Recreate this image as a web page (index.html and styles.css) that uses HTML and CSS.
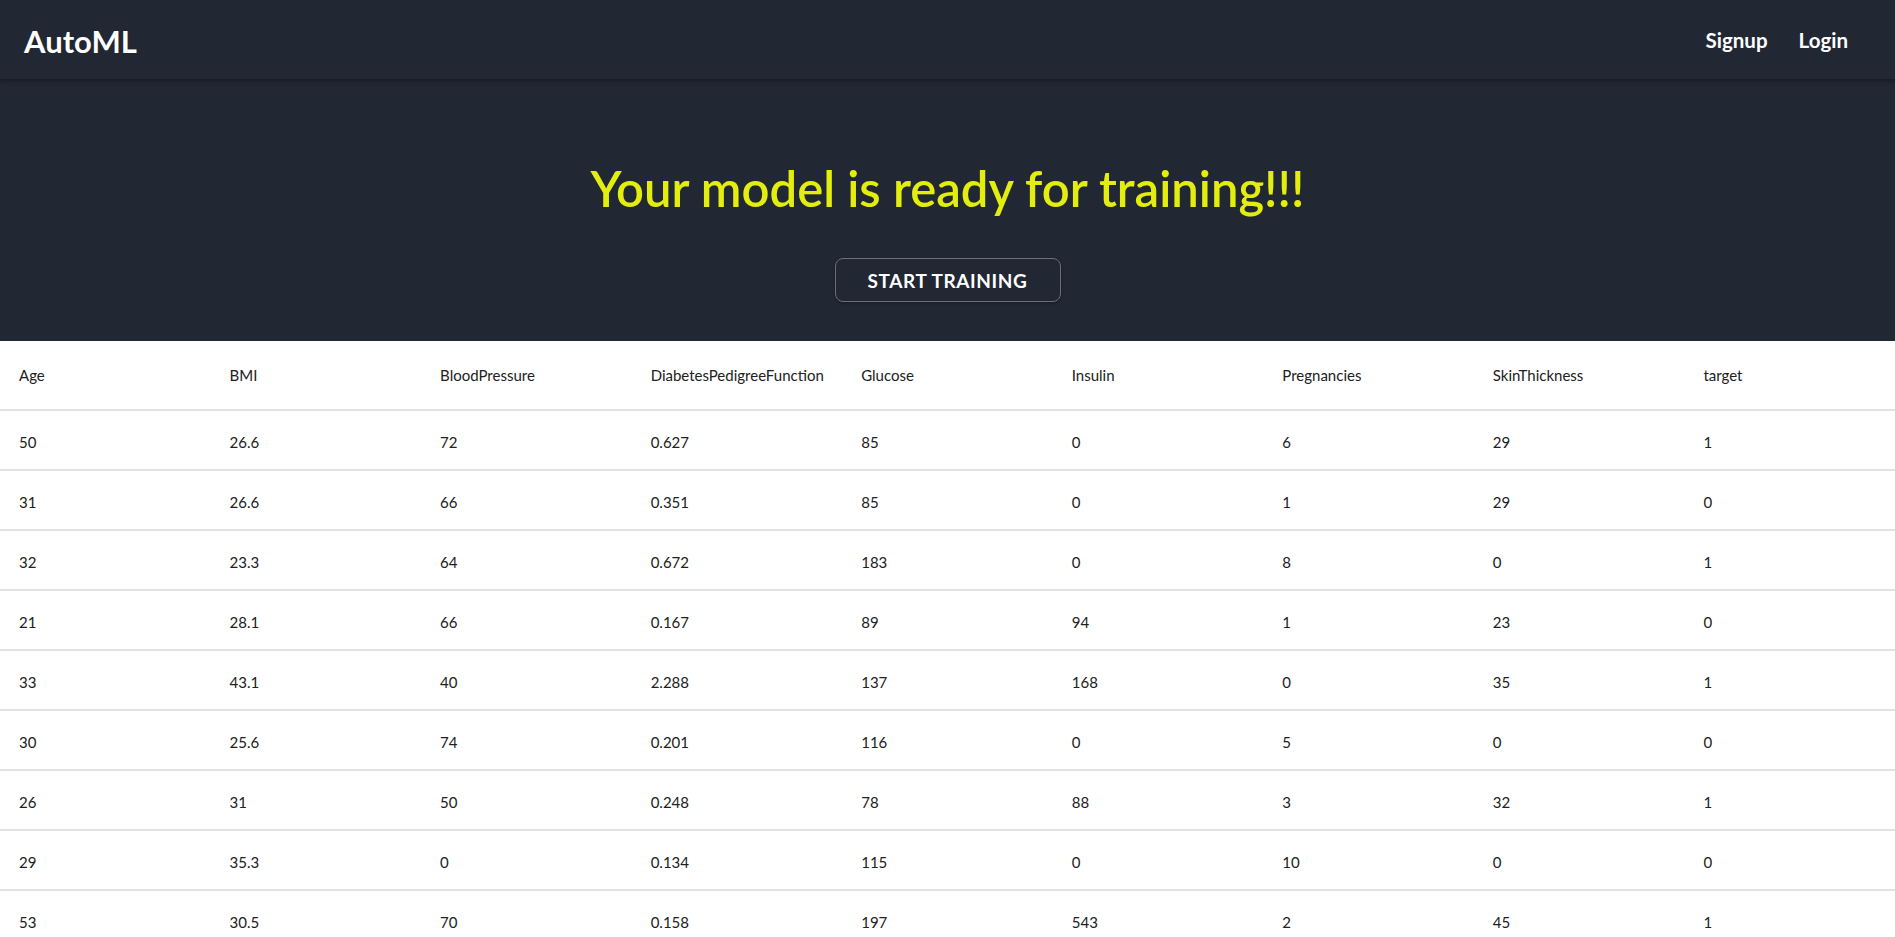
FILE: index.html
```html
<!DOCTYPE html>
<html lang="en">
<head>
<meta charset="utf-8">
<title>AutoML</title>
<link rel="stylesheet" href="styles.css">
</head>
<body>
<header class="navbar">
  <div class="brand">AutoML</div>
  <nav class="nav-links">
    <a class="nav-link" href="#">Signup</a>
    <a class="nav-link" href="#">Login</a>
  </nav>
</header>
<section class="hero">
  <h1 class="hero-title">Your model is ready for training!!!</h1>
  <button class="train-btn" type="button">START TRAINING</button>
</section>
<table class="data-table">
  <thead>
    <tr><th>Age</th><th>BMI</th><th>BloodPressure</th><th>DiabetesPedigreeFunction</th><th>Glucose</th><th>Insulin</th><th>Pregnancies</th><th>SkinThickness</th><th>target</th></tr>
  </thead>
  <tbody>
    <tr><td>50</td><td>26.6</td><td>72</td><td>0.627</td><td>85</td><td>0</td><td>6</td><td>29</td><td>1</td></tr>
    <tr><td>31</td><td>26.6</td><td>66</td><td>0.351</td><td>85</td><td>0</td><td>1</td><td>29</td><td>0</td></tr>
    <tr><td>32</td><td>23.3</td><td>64</td><td>0.672</td><td>183</td><td>0</td><td>8</td><td>0</td><td>1</td></tr>
    <tr><td>21</td><td>28.1</td><td>66</td><td>0.167</td><td>89</td><td>94</td><td>1</td><td>23</td><td>0</td></tr>
    <tr><td>33</td><td>43.1</td><td>40</td><td>2.288</td><td>137</td><td>168</td><td>0</td><td>35</td><td>1</td></tr>
    <tr><td>30</td><td>25.6</td><td>74</td><td>0.201</td><td>116</td><td>0</td><td>5</td><td>0</td><td>0</td></tr>
    <tr><td>26</td><td>31</td><td>50</td><td>0.248</td><td>78</td><td>88</td><td>3</td><td>32</td><td>1</td></tr>
    <tr><td>29</td><td>35.3</td><td>0</td><td>0.134</td><td>115</td><td>0</td><td>10</td><td>0</td><td>0</td></tr>
    <tr><td>53</td><td>30.5</td><td>70</td><td>0.158</td><td>197</td><td>543</td><td>2</td><td>45</td><td>1</td></tr>
  </tbody>
</table>
</body>
</html>
```

FILE: styles.css
```css
* { box-sizing: border-box; }

body {
  margin: 0;
  font-family: "Segoe UI", Lato, "Open Sans", sans-serif;
  background: #ffffff;
  color: #212121;
}

.navbar {
  position: relative;
  z-index: 1;
  display: flex;
  align-items: center;
  justify-content: space-between;
  height: 79px;
  padding: 0 47px 0 24px;
  background: #212733;
  box-shadow: 0 2px 4px rgba(0, 0, 0, 0.35);
}

.brand {
  color: #ffffff;
  font-size: 31px;
  font-weight: 700;
  margin-top: 2px;
}

.nav-links {
  display: flex;
  gap: 31px;
}

.nav-link {
  color: #ffffff;
  text-decoration: none;
  font-size: 20.5px;
  font-weight: 700;
}

.hero {
  display: flex;
  flex-direction: column;
  align-items: center;
  background: #212733;
  height: 262px;
  padding-top: 79px;
}

.hero-title {
  margin: 0;
  color: #e3ee0f;
  font-size: 49px;
  font-weight: 600;
  line-height: 60px;
}

.train-btn {
  margin-top: 40px;
  width: 226px;
  height: 44px;
  padding: 0;
  background: #212733;
  color: #ffffff;
  border: 1px solid #6a6f7a;
  border-radius: 8px;
  font-family: inherit;
  font-size: 19px;
  font-weight: 700;
  letter-spacing: 0.6px;
  box-shadow: 0 1px 3px rgba(0, 0, 0, 0.3);
  cursor: pointer;
}

.data-table {
  width: 100%;
  border-collapse: collapse;
  table-layout: fixed;
  font-size: 15px;
}

.data-table th,
.data-table td {
  text-align: left;
  padding: 0 19px;
  border-bottom: 2px solid #e2e2e2;
  color: #212121;
  white-space: nowrap;
}

.data-table th {
  height: 69px;
  font-weight: 400;
}

.data-table td {
  height: 60px;
  padding-top: 3px;
}
```
